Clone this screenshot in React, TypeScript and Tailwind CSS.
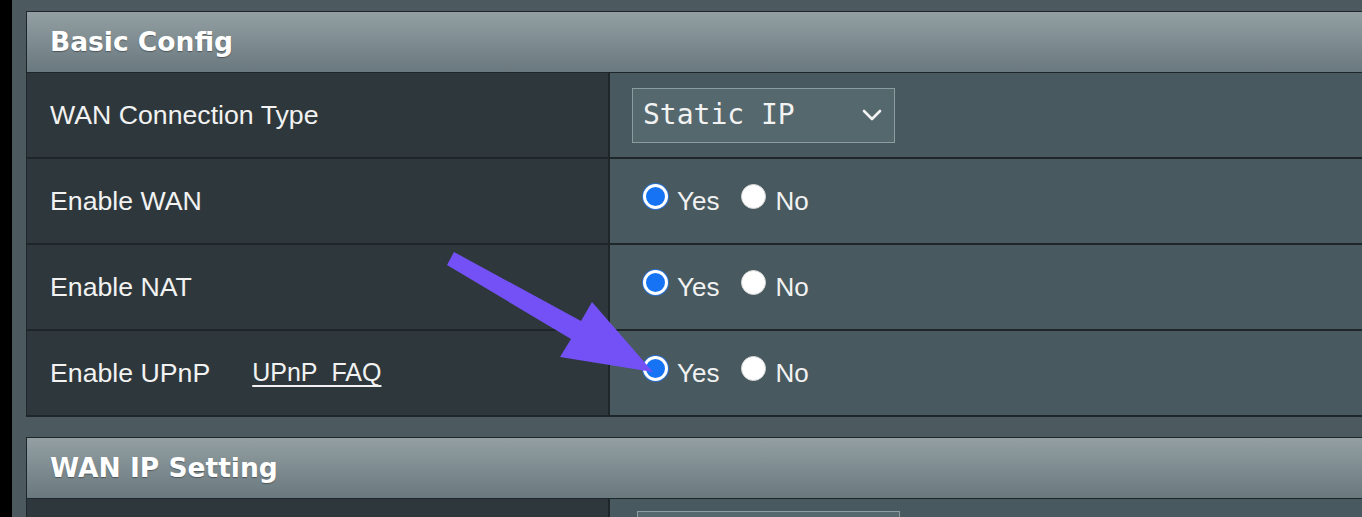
import React from "react";

const sans = "font-['Liberation_Sans',Arial,sans-serif]";
const mono = "font-['DejaVu_Sans_Mono',monospace]";

function Radio({ checked }: { checked: boolean }) {
  if (checked) {
    return (
      <span className="mb-[10px] h-[25px] w-[25px] shrink-0 rounded-full border-[3px] border-white bg-[#1673f4] ring-1 ring-[#2a6fd0]" />
    );
  }
  return (
    <span className="mb-[10px] h-[25px] w-[25px] shrink-0 rounded-full border border-[#d6d6d6] bg-white" />
  );
}

function YesNo({ value = true }: { value?: boolean }) {
  return (
    <div className={`flex items-center pl-[33px] text-[26px] text-[#f2f2f2] ${sans}`}>
      <Radio checked={value} />
      <span className="ml-[9px]">Yes</span>
      <span className="ml-[22px]" />
      <Radio checked={!value} />
      <span className="ml-[9px]">No</span>
    </div>
  );
}

function Row({ label, children }: { label: React.ReactNode; children: React.ReactNode }) {
  return (
    <div className="flex h-[86px] border-b-2 border-[#1f2629]">
      <div className={`flex w-[583px] shrink-0 items-center border-r-2 border-[#1f2629] bg-[#2e383c] pl-[23px] text-[26.7px] text-[#f2f2f2] ${sans}`}>
        {label}
      </div>
      <div className="flex flex-1 items-center bg-[#485a5f]">{children}</div>
    </div>
  );
}

function Header({ title }: { title: string }) {
  return (
    <div className="flex h-[61px] items-center border-b border-[#1f2629] bg-gradient-to-b from-[#939fa2] to-[#6a797f] pl-[23px]">
      <h2 className="font-['DejaVu_Sans',sans-serif] text-[26.5px] font-bold text-white [text-shadow:0_1px_1px_rgba(0,0,0,0.35)]">
        {title}
      </h2>
    </div>
  );
}

export default function App() {
  return (
    <div className="relative flex h-[517px] w-[1362px] overflow-hidden bg-black">
      <div className="w-[12px] shrink-0" />
      <div className="flex-1 bg-[#4c5a5f] pl-[14px] pt-[11px]">
        {/* Basic Config */}
        <section className="border-l border-t border-[#1f2629]">
          <Header title="Basic Config" />
          <Row label="WAN Connection Type">
            <div className="ml-[22px] flex h-[55px] w-[263px] items-center justify-between border border-[#8c9c9f] bg-[#55686d] pl-[10px] pr-[12px]">
              <span className={`${mono} text-[28px] text-[#f2f2f2]`}>Static IP</span>
              <svg width="20" height="14" viewBox="0 0 20 14" fill="none">
                <path d="M2 3l8 8 8-8" stroke="#f2f2f2" strokeWidth="2.6" strokeLinecap="round" strokeLinejoin="round" />
              </svg>
            </div>
          </Row>
          <Row label="Enable WAN">
            <YesNo />
          </Row>
          <Row label="Enable NAT">
            <YesNo />
          </Row>
          <Row
            label={
              <>
                <span>Enable UPnP</span>
                <span className="ml-[42px] text-[25px] underline underline-offset-[4px]">UPnP&nbsp;&nbsp;FAQ</span>
              </>
            }
          >
            <YesNo />
          </Row>
        </section>

        {/* WAN IP Setting */}
        <section className="mt-[20px] border-l border-t border-[#1f2629]">
          <Header title="WAN IP Setting" />
          <div className="flex h-[86px]">
            <div className="w-[583px] shrink-0 border-r-2 border-[#1f2629] bg-[#2e383c]" />
            <div className="flex-1 bg-[#485a5f] pl-[27px] pt-[12px]">
              <div className="h-[55px] w-[263px] border border-[#8c9c9f] bg-[#55686d]" />
            </div>
          </div>
        </section>
      </div>

      {/* annotation arrow */}
      <svg className="pointer-events-none absolute left-0 top-0" width="1362" height="517" viewBox="0 0 1362 517">
        <polygon
          points="454,252 581,321 592,302 653,372 560,357 571,339 447,265"
          fill="#7351f6"
        />
      </svg>
    </div>
  );
}
